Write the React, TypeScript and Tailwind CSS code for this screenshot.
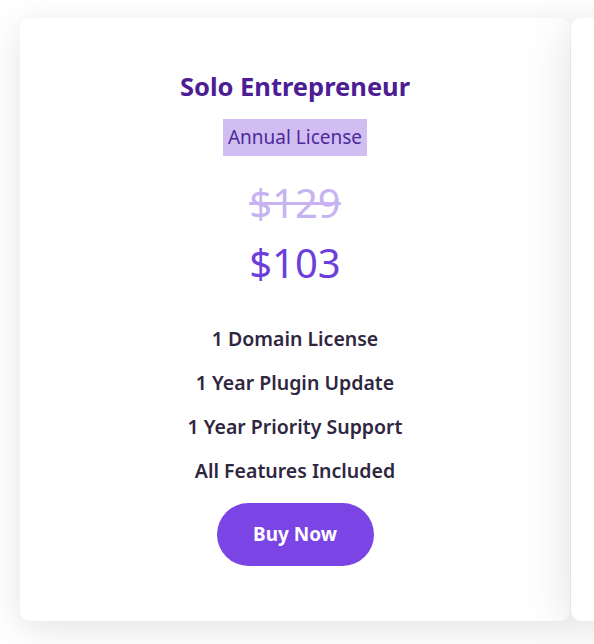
import React from 'react';

const features = [
  '1 Domain License',
  '1 Year Plugin Update',
  '1 Year Priority Support',
  'All Features Included',
];

export default function App() {
  return (
    <div className="h-[644px] w-[594px] overflow-hidden bg-white" style={{ fontFamily: '"Noto Sans", Lato, sans-serif' }}>
      <div className="flex pl-[20px] pt-[18px]">
        {/* pricing card */}
        <div className="flex h-[603px] w-[550px] shrink-0 flex-col items-center rounded-[10px] bg-white pt-[51px] shadow-[0_8px_36px_rgba(0,0,0,0.11)]">
          <h3 className="text-[25.5px] font-bold leading-[34px] text-[#4c1d95]">Solo Entrepreneur</h3>
          <span className="mt-[16px] bg-[#d1bdf2] px-[5px] text-[19px] leading-[37px] text-[#4b2b99]">Annual License</span>
          <div className="mt-[23px] text-[40px] leading-[48px] text-[#c7b2f2] line-through decoration-[3px]">$129</div>
          <div className="mt-[12px] text-[40px] leading-[48px] text-[#6c3fdb]">$103</div>
          <ul className="mt-[40px] flex flex-col items-center gap-[20px]">
            {features.map((f) => (
              <li key={f} className="text-[19.5px] font-semibold leading-[24px] text-[#2f2640]">{f}</li>
            ))}
          </ul>
          <button className="mt-[20px] h-[63px] w-[157px] rounded-full bg-[#7b44e4] text-[19px] font-bold text-white">Buy Now</button>
        </div>
        {/* next card peeking in */}
        <div className="relative z-10 ml-px h-[603px] w-[550px] shrink-0 rounded-[10px] bg-white shadow-[0_8px_50px_rgba(0,0,0,0.13)]" />
      </div>
    </div>
  );
}
